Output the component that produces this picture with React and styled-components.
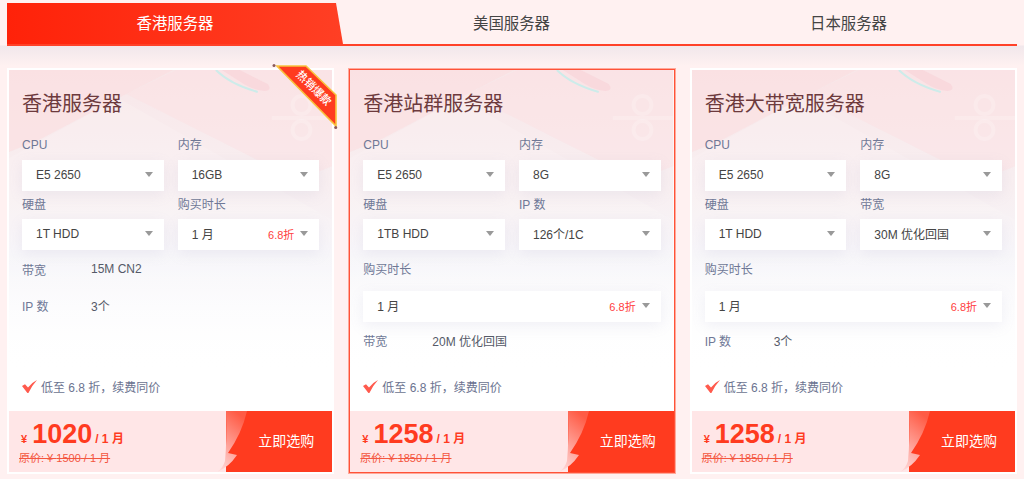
import React from 'react';
import styled, { createGlobalStyle } from 'styled-components';

const Global = createGlobalStyle`
  html, body { margin: 0; padding: 0; background: #fff1f1; }
  body { font-family: "Liberation Sans", "Noto Sans CJK SC", sans-serif; }
  * { box-sizing: border-box; }
`;

const Page = styled.div`
  width: 1024px;
  height: 479px;
  overflow: hidden;
  padding: 3px 7px 0;
  background: linear-gradient(180deg, #fff1f1 45px, #f1e7eb 46px, #fff1f1 66px);
  position: relative;
`;

const TabBar = styled.div`
  display: grid;
  grid-template-columns: 336px 1fr 1fr;
  height: 43px;
  border-bottom: 2px solid #ff4128;
  position: relative;
  z-index: 1;
`;

const Tab = styled.div`
  display: flex;
  align-items: center;
  justify-content: center;
  font-size: 15.4px;
  padding-bottom: 3px;
  color: ${p => (p.$active ? '#fff' : '#444')};
  height: 41px;
  ${p => p.$active && `
    width: 336px;
    background: linear-gradient(90deg, #ff2209, #ff3f24);
    clip-path: polygon(0 0, 329px 0, 336px 100%, 0 100%);
  `}
`;

const Cards = styled.div`
  display: grid;
  grid-template-columns: repeat(3, 1fr);
  column-gap: 14px;
  margin-top: 22px;
`;

const Card = styled.div`
  position: relative;
  height: 406px;
  border: 2px solid ${p => (p.$featured ? '#ffa99b' : '#fff')};
  outline: ${p => (p.$featured ? '1px solid #ff5238' : 'none')};
  outline-offset: -2px;
  background: #fff;
  display: flex;
  flex-direction: column;
`;

const Art = styled.svg`
  position: absolute;
  left: 0;
  top: 0;
  width: 100%;
  height: 300px;
`;

const Body = styled.div`
  position: relative;
  flex: 1;
  padding: 0 13px;
  min-height: 0;
  display: flex;
  flex-direction: column;
`;

const Title = styled.h3`
  margin: 0;
  height: 60px;
  padding-top: 17px;
  font-size: 20px;
  line-height: 34px;
  font-weight: 400;
  color: #6d3a3d;
`;

const Grid = styled.div`
  display: grid;
  grid-template-columns: 1fr 1fr;
  column-gap: 14px;
`;

const Field = styled.div`
  grid-column: ${p => (p.$wide ? '1 / -1' : 'auto')};
`;

const Label = styled.div`
  font-size: 12px;
  color: #6f7896;
  height: ${p => p.$h}px;
  line-height: ${p => p.$lh}px;
`;

const Select = styled.div`
  height: 31px;
  background: #fff;
  box-shadow: 0 4px 14px rgba(150, 150, 190, 0.12);
  display: flex;
  align-items: center;
  padding: 0 11px 2px 14px;
  font-size: 12px;
  color: #444;
`;

const SelectText = styled.span`
  flex: 1;
`;

const Discount = styled.span`
  color: #ff4040;
  font-size: 11px;
  margin-right: 6px;
`;

const Caret = styled.i`
  width: 0;
  height: 0;
  border-left: 4px solid transparent;
  border-right: 4px solid transparent;
  border-top: 5px solid #999;
`;

const Specs = styled.div`
  margin-top: ${p => p.$top}px;
`;

const Spec = styled.div`
  display: flex;
  height: 36px;
  align-items: center;
  font-size: 12px;
  color: #555a68;
`;

const SpecName = styled.span`
  width: 69px;
  color: #6f7896;
`;

const Note = styled.div`
  position: absolute;
  left: 13px;
  top: 308px;
  display: flex;
  align-items: center;
  gap: 4px;
  font-size: 12px;
  color: #6b7390;
`;

const Footer = styled.div`
  height: 61px;
  flex: none;
  position: relative;
  display: flex;
  justify-content: space-between;
  background: #ffe6e7;
`;

const PriceBox = styled.div`
  padding: 6px 0 0 10px;
  color: #ff3b1f;
  font-weight: 700;
`;

const PriceLine = styled.div`
  display: flex;
  align-items: baseline;
  height: 34px;
  line-height: 35px;
  font-size: 12px;
`;

const Yen = styled.span`
  margin: 0 4px 0 2px;
  font-size: 11px;
`;

const Amount = styled.span`
  font-size: 27px;
  margin-right: 3px;
  margin-left: 1px;
`;

const OldPrice = styled.div`
  font-size: 11px;
  font-weight: 400;
  line-height: 14px;
  text-decoration: line-through;
  color: #f4563f;
`;

const Buy = styled.div`
  position: relative;
  width: 106px;
  display: flex;
  align-items: center;
  justify-content: flex-end;
  padding: 0 18px 4px 0;
  color: #fff;
  font-size: 14px;
  background: #ff3b1f;
`;

const Curl = styled.svg`
  position: absolute;
  left: -9px;
  top: 0;
  width: 32px;
  height: 61px;
`;

const Ribbon = styled.svg`
  position: absolute;
  right: -6px;
  top: -6px;
  width: 68px;
  height: 66px;
`;

const RibbonText = styled.div`
  position: absolute;
  right: -8px;
  top: 11px;
  width: 52px;
  text-align: center;
  font-size: 11px;
  line-height: 14px;
  color: #fff;
  font-weight: 500;
  transform: rotate(45deg);
`;

function CardArt({ id }) {
  return (
    <Art viewBox="0 0 325 300" preserveAspectRatio="none" aria-hidden="true">
      <defs>
        <linearGradient id={`bg${id}`} x1="0" y1="0" x2="0" y2="1">
          <stop offset="0" stopColor="#f8e7e9" />
          <stop offset="0.4" stopColor="#f8eff1" />
          <stop offset="0.62" stopColor="#f6f5f9" />
          <stop offset="1" stopColor="#ffffff" />
        </linearGradient>
        <linearGradient id={`fade${id}`} x1="0" y1="0" x2="0" y2="1">
          <stop offset="0" stopColor="#fff" stopOpacity="0" />
          <stop offset="0.6" stopColor="#fff" stopOpacity="0" />
          <stop offset="1" stopColor="#fff" stopOpacity="1" />
        </linearGradient>
      </defs>
      <rect width="325" height="300" fill={`url(#bg${id})`} />
      <path d="M0 0 L165 0 L110 28 L30 70 L0 82Z" fill="#fcdcde" opacity="0.55" />
      <path d="M110 28 L325 150 L325 190 L0 190 L0 88Z" fill="#fff" opacity="0.14" />
      <path d="M168 0 L325 0 L325 96 L290 110 L118 24Z" fill="#fddfe1" opacity="0.4" />
      <path d="M214 0 L232 0 L260 14 Q265 20 257 21 Q246 20 236 14Z" fill="#f9d6db" opacity="0.8" />
      <path d="M208 0 Q222 14 250 22" stroke="#cdecea" strokeWidth="2" fill="none" />
      <g fill="none" stroke="#fff" strokeWidth="4" opacity="0.2">
        <circle cx="294" cy="35" r="9" />
        <circle cx="294" cy="60" r="9" />
      </g>
      <rect x="264" y="46" width="61" height="4" fill="#fff" opacity="0.2" />
      <rect width="325" height="300" fill={`url(#fade${id})`} />
    </Art>
  );
}

const Check = () => (
  <svg width="15" height="13" viewBox="0 0 15 13" aria-hidden="true">
    <path d="M0 6 L3 4.2 L6 7.4 Q9.5 2.8 15 0 Q10.5 4.8 6.4 13 L5.4 13 Z" fill="#ff5a4d" />
  </svg>
);

function Sel({ value, off }) {
  return (
    <Select>
      <SelectText>{value}</SelectText>
      {off && <Discount>{off}</Discount>}
      <Caret />
    </Select>
  );
}

function Product({ d, idx }) {
  return (
    <Card $featured={d.featured}>
      <CardArt id={idx} />
      <Body>
        <Title>{d.title}</Title>
        <Grid>
          {d.fields.map(f => (
            <Field key={f.label} $wide={f.wide}>
              <Label $h={f.wide ? 41 : f.first ? 30 : 28} $lh={f.wide ? 41 : f.first ? 30 : 28}>{f.label}</Label>
              <Sel value={f.value} off={f.off} />
            </Field>
          ))}
        </Grid>
        <Specs $top={d.specTop}>
          {d.specs.map(s => (
            <Spec key={s[0]}>
              <SpecName>{s[0]}</SpecName>
              <span>{s[1]}</span>
            </Spec>
          ))}
        </Specs>
        <Note>
          <Check />
          低至 6.8 折，续费同价
        </Note>
      </Body>
      <Footer>
        <PriceBox>
          <PriceLine>
            <Yen>¥</Yen>
            <Amount>{d.price}</Amount>
            / 1 月
          </PriceLine>
          <OldPrice>原价: ¥ {d.old} / 1 月</OldPrice>
        </PriceBox>
        <Buy>
          <Curl viewBox="0 0 32 61" aria-hidden="true">
            <defs>
              <linearGradient id={`curl${idx}`} x1="0.6" y1="0" x2="0.2" y2="1">
                <stop offset="0" stopColor="#ff5b45" />
                <stop offset="1" stopColor="#ffd8d8" />
              </linearGradient>
            </defs>
            <path d="M9 0 L30 0 Q25 22 11 42 L20 44 Q12 56 0 61 Q6 57 8 50 Q10 30 9 0Z" fill={`url(#curl${idx})`} />
          </Curl>
          立即选购
        </Buy>
      </Footer>
      {d.hot && (
        <>
          <Ribbon viewBox="0 0 68 66" aria-hidden="true">
            <path d="M7 2 L36 2 L66 31 L66 62Z" fill="#ff3b1f" stroke="#f9c23c" strokeWidth="1.6" />
            <circle cx="4" cy="1.5" r="1.5" fill="#8a5a5a" />
            <circle cx="65.7" cy="63.5" r="1.5" fill="#8a5a5a" />
          </Ribbon>
          <RibbonText>热销爆款</RibbonText>
        </>
      )}
    </Card>
  );
}

const data = [
  {
    title: '香港服务器', hot: true, price: '1020', old: '1500', specTop: 1,
    fields: [
      { label: 'CPU', value: 'E5 2650', first: true },
      { label: '内存', value: '16GB', first: true },
      { label: '硬盘', value: '1T HDD' },
      { label: '购买时长', value: '1 月', off: '6.8折' },
    ],
    specs: [['带宽', '15M CN2'], ['IP 数', '3个']],
  },
  {
    title: '香港站群服务器', featured: true, price: '1258', old: '1850', specTop: 0,
    fields: [
      { label: 'CPU', value: 'E5 2650', first: true },
      { label: '内存', value: '8G', first: true },
      { label: '硬盘', value: '1TB HDD' },
      { label: 'IP 数', value: '126个/1C' },
      { label: '购买时长', value: '1 月', off: '6.8折', wide: true },
    ],
    specs: [['带宽', '20M 优化回国']],
  },
  {
    title: '香港大带宽服务器', price: '1258', old: '1850', specTop: 0,
    fields: [
      { label: 'CPU', value: 'E5 2650', first: true },
      { label: '内存', value: '8G', first: true },
      { label: '硬盘', value: '1T HDD' },
      { label: '带宽', value: '30M 优化回国' },
      { label: '购买时长', value: '1 月', off: '6.8折', wide: true },
    ],
    specs: [['IP 数', '3个']],
  },
];

export default function App() {
  return (
    <Page>
      <Global />
      <TabBar>
        <Tab $active>香港服务器</Tab>
        <Tab>美国服务器</Tab>
        <Tab>日本服务器</Tab>
      </TabBar>
      <Cards>
        {data.map((d, i) => <Product key={d.title} d={d} idx={i} />)}
      </Cards>
    </Page>
  );
}
